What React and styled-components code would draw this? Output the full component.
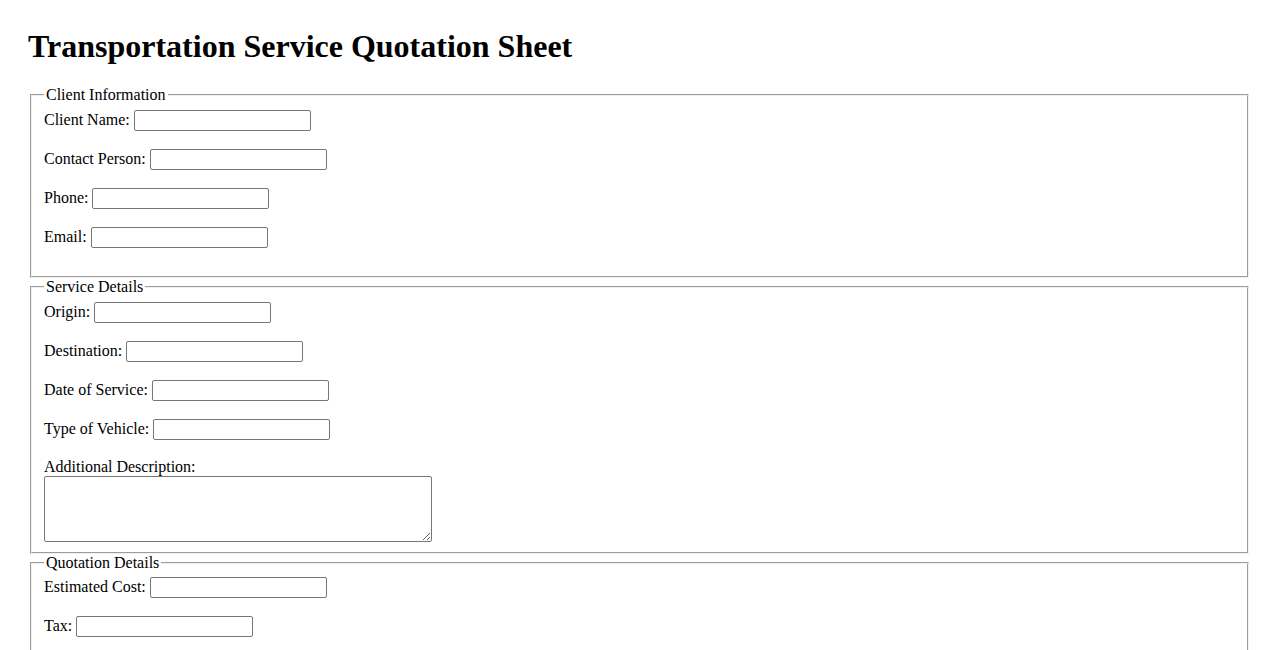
import React from "react";
import styled, { createGlobalStyle } from "styled-components";

const GlobalStyle = createGlobalStyle`
    body{
        margin: 28px 27px 28px 28px;
        font-family: "Liberation Serif", "Times New Roman", serif;
        font-size: 16px;
        color: #000;
        background: #fff;
    }
`;

const Title = styled.h1`
    font-size: 32px;
    font-weight: 700;
    margin: 0 0 21.44px;
    line-height: normal;
`;

const Section = styled.fieldset`
    margin: 0 2px;
    padding: 5.6px 12px 10px;
    border: 2px groove #f0f0f0;
    min-width: min-content;
`;

const Legend = styled.legend`
    padding: 0 2px;
    font-size: 16px;
`;

const Field = styled.div`
    margin-bottom: ${({ $last }) => ($last ? "0" : "18px")};
    line-height: normal;
`;

const Label = styled.label`
    font-size: 16px;
`;

const TextInput = styled.input`
    box-sizing: border-box;
    width: 177px;
    height: 21px;
    padding: 1px 2px;
    border: 1px solid #767676;
    border-radius: 2px;
    font-size: 13.333px;
    font-family: "Liberation Sans", Arial, sans-serif;
    vertical-align: baseline;
`;

const TextArea = styled.textarea`
    display: block;
    box-sizing: border-box;
    width: 388px;
    height: 66px;
    padding: 2px;
    border: 1px solid #767676;
    border-radius: 2px;
    font-size: 13.333px;
    font-family: "Liberation Mono", monospace;
`;

const sections = [
    {
        title: "Client Information",
        fields: ["Client Name", "Contact Person", "Phone", "Email"],
    },
    {
        title: "Service Details",
        fields: ["Origin", "Destination", "Date of Service", "Type of Vehicle"],
        description: true,
    },
    {
        title: "Quotation Details",
        fields: ["Estimated Cost", "Tax"],
    },
];

const toId = (s) => s.toLowerCase().replace(/\s+/g, "-");

const App = () => {
    return (
        <>
            <GlobalStyle />
            <Title>Transportation Service Quotation Sheet</Title>
            <form>
                {sections.map((section) => (
                    <Section key={section.title}>
                        <Legend>{section.title}</Legend>
                        {section.fields.map((f) => (
                            <Field key={f}>
                                <Label htmlFor={toId(f)}>{f}:</Label>{" "}
                                <TextInput id={toId(f)} type="text" />
                            </Field>
                        ))}
                        {section.description && (
                            <Field $last>
                                <Label htmlFor="description">Additional Description:</Label>
                                <TextArea id="description" />
                            </Field>
                        )}
                    </Section>
                ))}
            </form>
        </>
    );
};

export default App;
